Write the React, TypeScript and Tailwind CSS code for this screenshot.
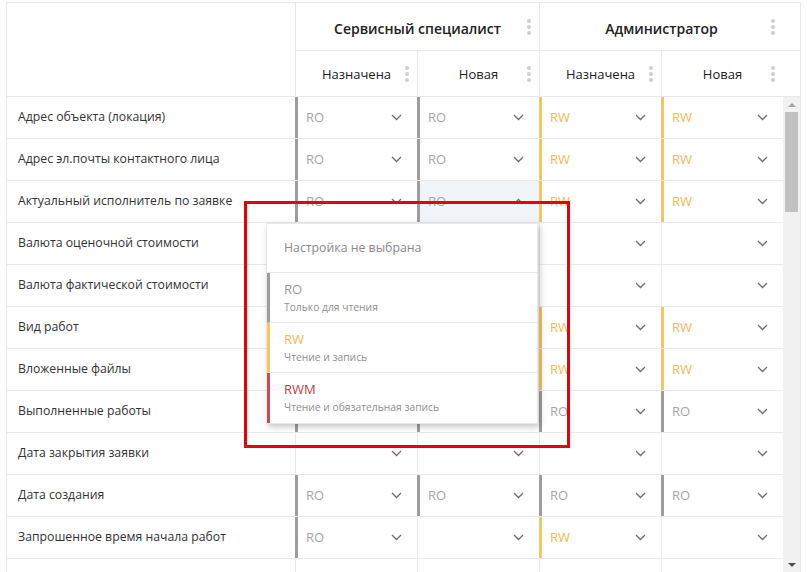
import React from "react";

type Perm = "RO" | "RW" | "";

const rows: { label: string; cells: Perm[]; active?: number; covered?: boolean }[] = [
  { label: "Адрес объекта (локация)", cells: ["RO", "RO", "RW", "RW"] },
  { label: "Адрес эл.почты контактного лица", cells: ["RO", "RO", "RW", "RW"] },
  { label: "Актуальный исполнитель по заявке", cells: ["RO", "RO", "RW", "RW"], active: 1 },
  { label: "Валюта оценочной стоимости", cells: ["", "", "", ""], covered: true },
  { label: "Валюта фактической стоимости", cells: ["", "", "", ""], covered: true },
  { label: "Вид работ", cells: ["", "", "RW", "RW"], covered: true },
  { label: "Вложенные файлы", cells: ["", "", "RW", "RW"], covered: true },
  { label: "Выполненные работы", cells: ["RO", "RO", "RO", "RO"], covered: true },
  { label: "Дата закрытия заявки", cells: ["", "", "", ""] },
  { label: "Дата создания", cells: ["RO", "RO", "RO", "RO"] },
  { label: "Запрошенное время начала работ", cells: ["RO", "", "RW", ""] },
  { label: "", cells: ["", "", "", ""] },
];

function Dots() {
  return (
    <div className="flex flex-col gap-[2px]">
      <span className="w-[4px] h-[4px] rounded-full bg-[#cfcfcf]" />
      <span className="w-[4px] h-[4px] rounded-full bg-[#cfcfcf]" />
      <span className="w-[4px] h-[4px] rounded-full bg-[#cfcfcf]" />
    </div>
  );
}

function Chevron({ up }: { up?: boolean }) {
  return (
    <svg width="11" height="7" viewBox="0 0 11 7" className={up ? "rotate-180" : ""}>
      <polyline points="1,1 5.5,5.5 10,1" fill="none" stroke="#6f6f6f" strokeWidth="1.3" />
    </svg>
  );
}

// covered: the cell sits under the open menu, only its bar shows
function Cell({ value, active, covered }: { value: Perm; active?: boolean; covered?: boolean }) {
  const border =
    value === "RO"
      ? "border-l-[3px] border-l-[#9d9d9d]"
      : value === "RW"
      ? "border-l-[3px] border-l-[#f4c561]"
      : "border-l border-l-[#e6eaec]";
  const text = value === "RW" ? "text-[#f2b950]" : "text-[#a6a6a6]";
  return (
    <div
      className={`w-[122px] h-full flex items-center justify-between pr-[15px] ${
        value ? "pl-2" : "pl-[10px]"
      } ${border} ${active ? "bg-[#f1f4f6]" : ""}`}
    >
      <span className={`text-[13px] ${text}`}>{covered ? "" : value}</span>
      {!covered && <Chevron up={active} />}
    </div>
  );
}

export default function App() {
  return (
    <div
      className="relative w-[807px] h-[572px] overflow-hidden bg-white text-[#333]"
      style={{ fontFamily: "'Open Sans', 'Liberation Sans', sans-serif" }}
    >
      <div className="ml-[6px] mt-[2px] w-[795px] border-l border-t border-r border-[#e6eaec]">
        {/* Header */}
        <div className="flex border-b border-[#e6eaec]">
          <div className="w-[288px]" />
          <div className="flex flex-col">
            <div className="flex h-[48px] border-b border-[#e6eaec]">
              <div className="relative w-[244px] pt-[3px] border-l border-[#e6eaec] flex items-center justify-center">
                <span className="text-[14px] font-semibold text-[#222]">Сервисный специалист</span>
                <div className="absolute right-[8px] top-1/2 -translate-y-1/2"><Dots /></div>
              </div>
              <div className="w-[261px] pr-[17px] border-l border-[#e6eaec]">
                <div className="relative h-full pt-[3px] flex items-center justify-center">
                  <span className="text-[14px] font-semibold text-[#222]">Администратор</span>
                  <div className="absolute right-[8px] top-1/2 -translate-y-1/2"><Dots /></div>
                </div>
              </div>
            </div>
            <div className="flex h-[45px]">
              {["Назначена", "Новая", "Назначена", "Новая"].map((t, i) => (
                <div
                  key={i}
                  className={`border-l border-[#e6eaec] ${i === 3 ? "w-[139px] pr-[17px]" : "w-[122px]"}`}
                >
                  <div className="relative h-full pt-[3px] flex items-center justify-center">
                    <span className="text-[13px] font-medium text-[#222]">{t}</span>
                    <div className="absolute right-[8px] top-1/2 -translate-y-1/2"><Dots /></div>
                  </div>
                </div>
              ))}
            </div>
          </div>
        </div>

        {/* Body */}
        <div className="flex h-[475px] overflow-hidden">
          <div className="w-[776px]">
            {rows.map((r, i) => (
              <div key={i} className="flex h-[42px] border-b border-[#e6eaec]">
                <div className="w-[288px] pl-[11px] flex items-center text-[12.25px] text-[#333]">
                  {r.label}
                </div>
                {r.cells.map((c, j) => (
                  <Cell key={j} value={c} active={r.active === j} covered={r.covered && j < 2} />
                ))}
              </div>
            ))}
          </div>
          <div className="w-[17px] bg-[#f1f1f1] flex flex-col items-center">
            <div className="h-[15px] flex items-center justify-center">
              <span className="w-0 h-0 border-l-[4px] border-r-[4px] border-b-[4px] border-l-transparent border-r-transparent border-b-[#a3a3a3]" />
            </div>
            <div className="w-[13px] h-[100px] bg-[#c1c1c1]" />
            <div className="flex-1" />
            <div className="h-[15px] flex items-center justify-center">
              <span className="w-0 h-0 border-l-[4px] border-r-[4px] border-t-[4px] border-l-transparent border-r-transparent border-t-[#505050]" />
            </div>
          </div>
        </div>
      </div>

      {/* Dropdown menu */}
      <div className="absolute left-[266px] top-[223px] w-[272px] bg-white border border-[#e8e8e8] shadow-[2px_3px_6px_rgba(0,0,0,0.22)]">
        <div className="h-[49px] pl-[17px] flex items-center border-b border-[#e6eaec] text-[12.3px] text-[#8a8a8a]">
          Настройка не выбрана
        </div>
        {[
          { t: "RO", s: "Только для чтения", bar: "border-l-[#9d9d9d]", c: "text-[#9a9a9a]" },
          { t: "RW", s: "Чтение и запись", bar: "border-l-[#f4c561]", c: "text-[#f2b950]" },
          { t: "RWM", s: "Чтение и обязательная запись", bar: "border-l-[#c94a56]", c: "text-[#c43d4a]" },
        ].map((o, i) => (
          <div
            key={o.t}
            className={`h-[50px] pl-[14px] pt-[8px] border-l-[3px] ${o.bar} ${i < 2 ? "border-b border-b-[#e6eaec]" : ""}`}
          >
            <div className={`text-[13px] leading-4 ${o.c}`}>{o.t}</div>
            <div className="text-[10.3px] leading-[13px] mt-[4px] text-[#8f8f8f]">{o.s}</div>
          </div>
        ))}
      </div>

      {/* Annotation frame */}
      <div className="absolute left-[244px] top-[201px] w-[326px] h-[247px] border-[3px] border-[#e5000a]" />
    </div>
  );
}
